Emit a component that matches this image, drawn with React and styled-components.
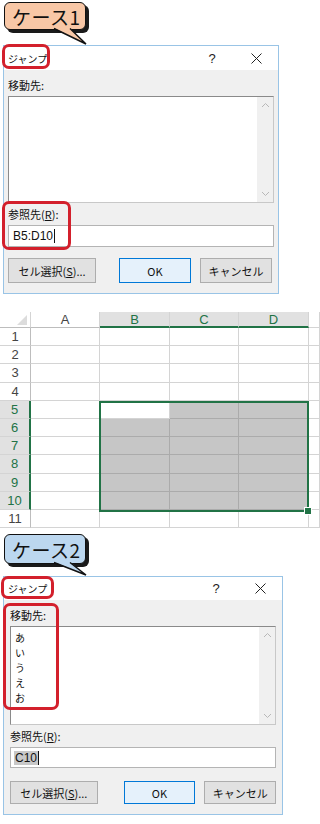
import React from "react";
import styled, { createGlobalStyle } from "styled-components";

const GlobalStyle = createGlobalStyle`
  body {
    margin: 0;
    background: #ffffff;
    font-family: "Noto Sans CJK JP", "Liberation Sans", sans-serif;
  }
`;

const Page = styled.div`
  width: 320px;
  height: 824px;
  overflow: hidden;
  display: flex;
  flex-direction: column;
  background: #fff;
`;

const CaseBlock = styled.div`
  position: relative;
  padding-top: ${(p) => p.top}px;
`;

const Bubble = styled.div`
  position: relative;
  margin-left: 4px;
  width: 82px;
  height: ${(p) => p.h}px;
  box-sizing: border-box;
  border: 1.5px solid #111;
  border-radius: 6px;
  background: ${(p) => p.bg};
  box-shadow: 3px 3px 0 #1a1a1a;
  display: flex;
  align-items: center;
  padding-left: 7px;
  font-size: 19px;
  color: #111;
  letter-spacing: 0.5px;
  z-index: 2;
`;

const Tail = styled.svg`
  position: absolute;
  left: 50px;
  top: ${(p) => p.top}px;
  z-index: 3;
  overflow: visible;
`;

const Dialog = styled.div`
  position: relative;
  margin-left: 3px;
  margin-top: ${(p) => p.gap}px;
  width: ${(p) => p.w}px;
  box-sizing: border-box;
  border: 1px solid #99c4e6;
  background: #f0f0f0;
  font-size: 11px;
  color: #111;
`;

const TitleBar = styled.div`
  height: ${(p) => p.h}px;
  background: #fff;
  display: flex;
  align-items: center;
  padding-left: 4px;
  font-size: 10px;
`;

const TitleText = styled.span`
  flex: 1;
`;

const TitleBtn = styled.span`
  width: 44px;
  display: flex;
  justify-content: center;
  align-items: center;
  font-family: "Liberation Sans", sans-serif;
  font-size: 13px;
  color: #222;
`;

const Body = styled.div`
  padding: 6px ${(p) => p.side}px 10px ${(p) => p.side}px;
  display: flex;
  flex-direction: column;
`;

const Label = styled.div`
  height: 18px;
  line-height: 18px;
  margin-top: ${(p) => p.mt || 0}px;
  margin-bottom: ${(p) => p.mb || 2}px;
`;

const ListBox = styled.div`
  height: ${(p) => p.h}px;
  box-sizing: border-box;
  border: 1px solid #8a8a8a;
  border-right-color: #c8c8c8;
  border-bottom-color: #c8c8c8;
  background: #fff;
  display: flex;
`;

const ListItems = styled.div`
  flex: 1;
  padding: 3px 4px;
  font-size: 10px;
  line-height: 15px;
`;

const ListItem = styled.div`
  height: 15px;
`;

const ScrollBar = styled.div`
  width: 16px;
  background: #f0f0f0;
  display: flex;
  flex-direction: column;
  justify-content: space-between;
  align-items: center;
  padding: 5px 0;
`;

const Input = styled.div`
  height: ${(p) => p.h}px;
  box-sizing: border-box;
  border: 1px solid #b4b4b4;
  background: #fff;
  display: flex;
  align-items: center;
  padding-left: 3px;
  font-family: "Liberation Sans", sans-serif;
  font-size: 12px;
  margin-top: 1px;
`;

const Value = styled.span`
  background: ${(p) => (p.sel ? "#c8c8c8" : "transparent")};
  padding: 0 1px;
`;

const Caret = styled.span`
  display: inline-block;
  width: 1px;
  height: 14px;
  background: #111;
  vertical-align: middle;
`;

const ButtonRow = styled.div`
  display: flex;
  margin-top: ${(p) => p.mt}px;
`;

const Button = styled.div`
  width: ${(p) => p.w}px;
  height: ${(p) => p.h}px;
  margin-left: ${(p) => p.ml || 0}px;
  box-sizing: border-box;
  border: 1px solid ${(p) => (p.primary ? "#0078d7" : "#adadad")};
  background: ${(p) => (p.primary ? "#e5f1fb" : "#e1e1e1")};
  display: flex;
  align-items: center;
  justify-content: center;
  font-size: 11px;
  color: #111;
`;

const Mnemonic = styled.span`
  text-decoration: underline;
`;

const RedMark = styled.div`
  position: absolute;
  left: ${(p) => p.x}px;
  top: ${(p) => p.y}px;
  width: ${(p) => p.w}px;
  height: ${(p) => p.h}px;
  box-sizing: border-box;
  border: 3px solid #d3202c;
  border-radius: 7px;
  pointer-events: none;
`;

/* spreadsheet */
const Sheet = styled.div`
  position: relative;
  margin-top: 18px;
  display: grid;
  grid-template-columns: 31px 69px 70px 69px 70px 11px;
  grid-template-rows: 16px repeat(11, 18.2px);
  font-family: "Liberation Sans", sans-serif;
`;

const Corner = styled.div`
  position: relative;
  border-right: 1px solid #d4d4d4;
  border-bottom: 1px solid #bdbdbd;
  &::after {
    content: "";
    position: absolute;
    right: 3px;
    bottom: 2px;
    border-left: 10px solid transparent;
    border-bottom: 10px solid #dcdcdc;
  }
`;

const ColHead = styled.div`
  display: flex;
  align-items: center;
  justify-content: center;
  font-size: 13px;
  color: ${(p) => (p.on ? "#217346" : "#444")};
  background: ${(p) => (p.on ? "#e1e1e1" : "#fff")};
  border-right: 1px solid #d4d4d4;
  border-bottom: ${(p) => (p.on ? "2px solid #217346" : "1px solid #bdbdbd")};
  box-sizing: border-box;
`;

const RowHead = styled.div`
  display: flex;
  align-items: center;
  justify-content: center;
  font-size: 13px;
  color: ${(p) => (p.on ? "#217346" : "#444")};
  background: ${(p) => (p.on ? "#e1e1e1" : "#fff")};
  border-right: ${(p) => (p.on ? "2px solid #217346" : "1px solid #bdbdbd")};
  border-bottom: 1px solid #d4d4d4;
  box-sizing: border-box;
`;

const Cell = styled.div`
  background: ${(p) => (p.sel ? "#c6c6c6" : "#fff")};
  border-right: 1px solid ${(p) => (p.sel ? "#ababab" : "#d4d4d4")};
  border-bottom: 1px solid ${(p) => (p.sel ? "#ababab" : "#d4d4d4")};
  box-sizing: border-box;
`;

const Selection = styled.div`
  position: absolute;
  left: 99px;
  top: 89px;
  width: 210px;
  height: 111px;
  box-sizing: border-box;
  border: 2px solid #217346;
  pointer-events: none;
  &::after {
    content: "";
    position: absolute;
    right: -5px;
    bottom: -5px;
    width: 6px;
    height: 6px;
    background: #217346;
    border: 1px solid #fff;
  }
`;

const Chevron = ({ up }) => (
  <svg width="9" height="6" viewBox="0 0 9 6">
    <path
      d={up ? "M1 5 L4.5 1.5 L8 5" : "M1 1 L4.5 4.5 L8 1"}
      fill="none"
      stroke="#b8b8b8"
      strokeWidth="1"
    />
  </svg>
);

const CloseIcon = () => (
  <svg width="11" height="11" viewBox="0 0 11 11">
    <path d="M0.5 0.5 L10.5 10.5 M10.5 0.5 L0.5 10.5" stroke="#222" strokeWidth="1" fill="none" />
  </svg>
);

const JumpDialog = ({ w, gap, titleH, side, listH, items, value, sel, btnH, btnGap, inputH, okX }) => (
  <Dialog w={w} gap={gap}>
    <TitleBar h={titleH}>
      <TitleText>ジャンプ</TitleText>
      <TitleBtn>?</TitleBtn>
      <TitleBtn>
        <CloseIcon />
      </TitleBtn>
    </TitleBar>
    <Body side={side}>
      <Label>移動先:</Label>
      <ListBox h={listH}>
        <ListItems>
          {items.map((t) => (
            <ListItem key={t}>{t}</ListItem>
          ))}
        </ListItems>
        <ScrollBar>
          <Chevron up />
          <Chevron />
        </ScrollBar>
      </ListBox>
      <Label mt={2} mb={1}>
        参照先(<Mnemonic>R</Mnemonic>):
      </Label>
      <Input h={inputH}>
        <Value sel={sel}>{value}</Value>
        <Caret />
      </Input>
      <ButtonRow mt={btnGap}>
        <Button w={88} h={btnH}>
          セル選択(<Mnemonic>S</Mnemonic>)...
        </Button>
        <Button w={72} h={btnH} ml={okX} primary>
          OK
        </Button>
        <Button w={72} h={btnH} ml={9}>
          キャンセル
        </Button>
      </ButtonRow>
    </Body>
  </Dialog>
);

const cols = ["A", "B", "C", "D"];
const rows = Array.from({ length: 11 }, (_, i) => i + 1);

const Spreadsheet = () => (
  <Sheet>
    <Corner />
    {cols.map((c) => (
      <ColHead key={c} on={c !== "A"}>
        {c}
      </ColHead>
    ))}
    <Cell />
    {rows.map((r) => (
      <React.Fragment key={r}>
        <RowHead on={r >= 5 && r <= 10}>{r}</RowHead>
        {cols.map((c) => (
          <Cell
            key={c}
            sel={c !== "A" && r >= 5 && r <= 10 && !(c === "B" && r === 5)}
          />
        ))}
        <Cell />
      </React.Fragment>
    ))}
    <Selection />
  </Sheet>
);

const App = () => (
  <Page>
    <GlobalStyle />
    <CaseBlock top={2}>
      <Bubble h={28} bg="#f8c7a6">
        ケース1
      </Bubble>
      <Tail top={28} width="40" height="18">
        <path d="M4 0 L20 0 L36 16 Z" fill="#f8c7a6" />
        <path d="M4 0.5 L36 16 L20 0.5" fill="none" stroke="#111" strokeWidth="1.5" />
      </Tail>
      <JumpDialog
        w={276}
        gap={15}
        titleH={24}
        side={4}
        listH={107}
        items={[]}
        value="B5:D10"
        sel={false}
        inputH={22}
        btnH={25}
        btnGap={11}
        okX={23}
      />
      <RedMark x={2} y={44} w={48} h={25} />
      <RedMark x={2} y={201} w={69} h={49} />
    </CaseBlock>
    <Spreadsheet />
    <CaseBlock top={6}>
      <Bubble h={30} bg="#bcd7ef">
        ケース2
      </Bubble>
      <Tail top={34} width="40" height="18">
        <path d="M4 0 L20 0 L36 13 Z" fill="#bcd7ef" />
        <path d="M4 0.5 L36 13 L20 0.5" fill="none" stroke="#111" strokeWidth="1.5" />
      </Tail>
      <JumpDialog
        w={280}
        gap={12}
        titleH={23}
        side={6}
        listH={99}
        items={["あ", "い", "う", "え", "お"]}
        value="C10"
        sel
        inputH={21}
        btnH={23}
        btnGap={13}
        okX={26}
      />
      <RedMark x={1} y={48} w={53} h={23} />
      <RedMark x={3} y={75} w={56} h={107} />
    </CaseBlock>
  </Page>
);

export default App;
